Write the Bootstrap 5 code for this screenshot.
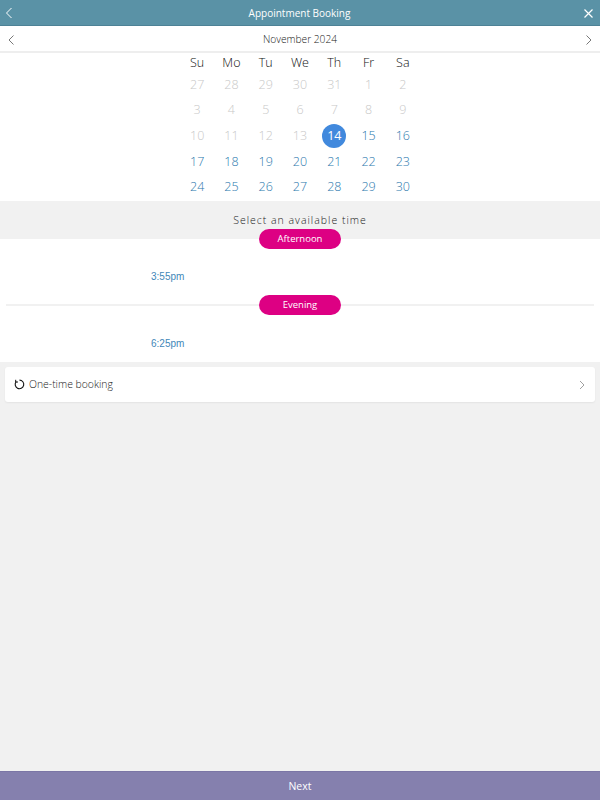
<!DOCTYPE html>
<html lang="en">

<head>
  <meta charset="UTF-8" />
  <meta name="viewport" content="width=device-width, initial-scale=1.0" />
  <link href="https://cdn.jsdelivr.net/npm/bootstrap@5.3.0/dist/css/bootstrap.min.css" rel="stylesheet" />
  <title>Appointment Booking</title>
  <style>
    body {
      background-color: #f1f1f1;
      color: #333;
      font-family: "Open Sans", sans-serif;
      height: 800px;
      overflow: hidden;
    }

    .page-wrap { height: 800px; }

    .top-bar {
      height: 26px;
      background: #5a92a6;
      border-bottom: 1px solid #4d8296;
      color: #fff;
      font-size: 10px;
      padding: 1px 6px 0 5px;
    }

    .top-bar svg, .month-bar svg, .one-time svg { display: block; }

    .month-bar {
      height: 27px;
      background: #fff;
      border-bottom: 2px solid #eee;
      font-size: 10.2px;
      font-weight: 300;
      color: #222;
      padding: 2px 7px 0;
    }

    .cal-area {
      height: 148px;
      background: #fff;
      padding-top: 1.4px;
    }

    .cal-grid {
      width: 240px;
      display: grid;
      grid-template-columns: repeat(7, 1fr);
      grid-template-rows: 18px;
      grid-auto-rows: 25.6px;
      text-align: center;
      font-size: 12.5px;
      font-weight: 300;
    }

    .cal-grid > div {
      display: flex;
      align-items: center;
      justify-content: center;
    }

    .cal-head { color: #111; }
    .day-off { color: #c8c8c8; }
    .day-on { color: #2b78ad; }

    .day-sel span {
      width: 24px;
      height: 24px;
      border-radius: 50%;
      background: #4189dd;
      color: #fff;
      display: flex;
      align-items: center;
      justify-content: center;
      font-weight: 400;
    }

    .time-title {
      height: 38px;
      font-size: 10.5px;
      font-weight: 300;
      letter-spacing: 1px;
      color: #222;
      padding-top: 1px;
    }

    .slots { background: #fff; height: 123px; padding: 0 6px; }

    .pill-row { height: 20px; margin-top: -10px; position: relative; }

    .pill-row.with-line { margin-top: 0; }

    .pill-line {
      position: absolute;
      left: 0;
      right: 0;
      top: 9px;
      border-top: 2px solid #f1f1f1;
    }

    .day-pill {
      position: relative;
      width: 82px;
      height: 20px;
      border-radius: 10px;
      background: #dd0083;
      color: #fff;
      font-size: 9.5px;
    }

    .with-line .day-pill { padding-top: 1px; }

    .slot-row {
      height: 46px;
      padding: 9px 0 0 145px;
      font-family: "Liberation Sans", sans-serif;
      font-size: 10px;
      color: #3f87b8;
    }

    .with-line + .slot-row { padding-top: 11px; }

    .one-time {
      height: 35px;
      margin: 5px 5px 0;
      background: #fff;
      border-radius: 3px;
      box-shadow: 0 1px 2px rgba(0, 0, 0, 0.06);
      font-size: 10.4px;
      font-weight: 300;
      color: #222;
      padding: 0 9px;
    }

    .next-bar {
      height: 29px;
      background: #8580ae;
      border-top: 1px solid #7b76a6;
      color: #fff;
      font-size: 10.5px;
      padding-top: 1px;
    }
  </style>
</head>

<body>
  <div class="page-wrap d-flex flex-column">
    <header class="top-bar d-flex align-items-center justify-content-between">
      <svg width="11" height="12" viewBox="0 0 11 12"><path d="M6.500 1 1.500 6l5 5" fill="none" stroke="#fff" stroke-width="1" /></svg>
      <span>Appointment Booking</span>
      <svg width="11" height="11" viewBox="0 0 11 11"><path d="M1.500 1.500l8 8M9.500 1.500l-8 8" fill="none" stroke="#fff" stroke-width="1.200" /></svg>
    </header>

    <div class="month-bar d-flex align-items-center justify-content-between">
      <svg width="8" height="12" viewBox="0 0 8 12"><path d="M6.500 1.500 2 6l4.500 4.500" fill="none" stroke="#555" stroke-width="0.8" /></svg>
      <span>November 2024</span>
      <svg width="8" height="12" viewBox="0 0 8 12"><path d="M1.500 1.500 6 6l-4.500 4.500" fill="none" stroke="#555" stroke-width="0.8" /></svg>
    </div>

    <section class="cal-area d-flex justify-content-center">
      <div class="cal-grid" id="cal-grid"></div>
    </section>

    <div class="time-title d-flex align-items-center justify-content-center">Select an available time</div>

    <section class="slots">
      <div class="pill-row d-flex justify-content-center">
        <div class="day-pill d-flex align-items-center justify-content-center">Afternoon</div>
      </div>
      <div class="slot-row d-flex align-items-center">3:55pm</div>
      <div class="pill-row with-line d-flex justify-content-center">
        <div class="pill-line"></div>
        <div class="day-pill d-flex align-items-center justify-content-center">Evening</div>
      </div>
      <div class="slot-row d-flex align-items-center">6:25pm</div>
    </section>

    <div class="one-time d-flex align-items-center justify-content-between">
      <div class="d-flex align-items-center gap-1">
        <svg width="11" height="11" viewBox="0 0 11 11"><path d="M5.500 1.100a4.300 4.300 0 1 1-3.300 1.500" fill="none" stroke="#111" stroke-width="1.100" /><path d="M1.700.8v2.200h2.300" fill="none" stroke="#111" stroke-width="1" /></svg>
        <span>One-time booking</span>
      </div>
      <svg width="8" height="12" viewBox="0 0 8 12"><path d="M2 2l4 4-4 4" fill="none" stroke="#888" stroke-width="0.8" /></svg>
    </div>

    <footer class="next-bar mt-auto d-flex align-items-center justify-content-center">Next</footer>
  </div>

  <script>
    const calGrid = document.getElementById('cal-grid');
    const heads = ['Su', 'Mo', 'Tu', 'We', 'Th', 'Fr', 'Sa'];
    const days = [27, 28, 29, 30, 31, 1, 2, 3, 4, 5, 6, 7, 8, 9, 10, 11, 12, 13, 14, 15, 16, 17, 18, 19, 20, 21, 22, 23, 24, 25, 26, 27, 28, 29, 30];

    heads.forEach((name) => {
      calGrid.innerHTML += `<div class="cal-head">${name}</div>`;
    });

    days.forEach((day, i) => {
      if (i < 18) {
        calGrid.innerHTML += `<div class="day-off">${day}</div>`;
      } else if (i === 18) {
        calGrid.innerHTML += `<div class="day-sel"><span>${day}</span></div>`;
      } else {
        calGrid.innerHTML += `<div class="day-on">${day}</div>`;
      }
    });
  </script>
  <script src="https://cdn.jsdelivr.net/npm/bootstrap@5.3.0/dist/js/bootstrap.bundle.min.js"></script>
</body>

</html>
